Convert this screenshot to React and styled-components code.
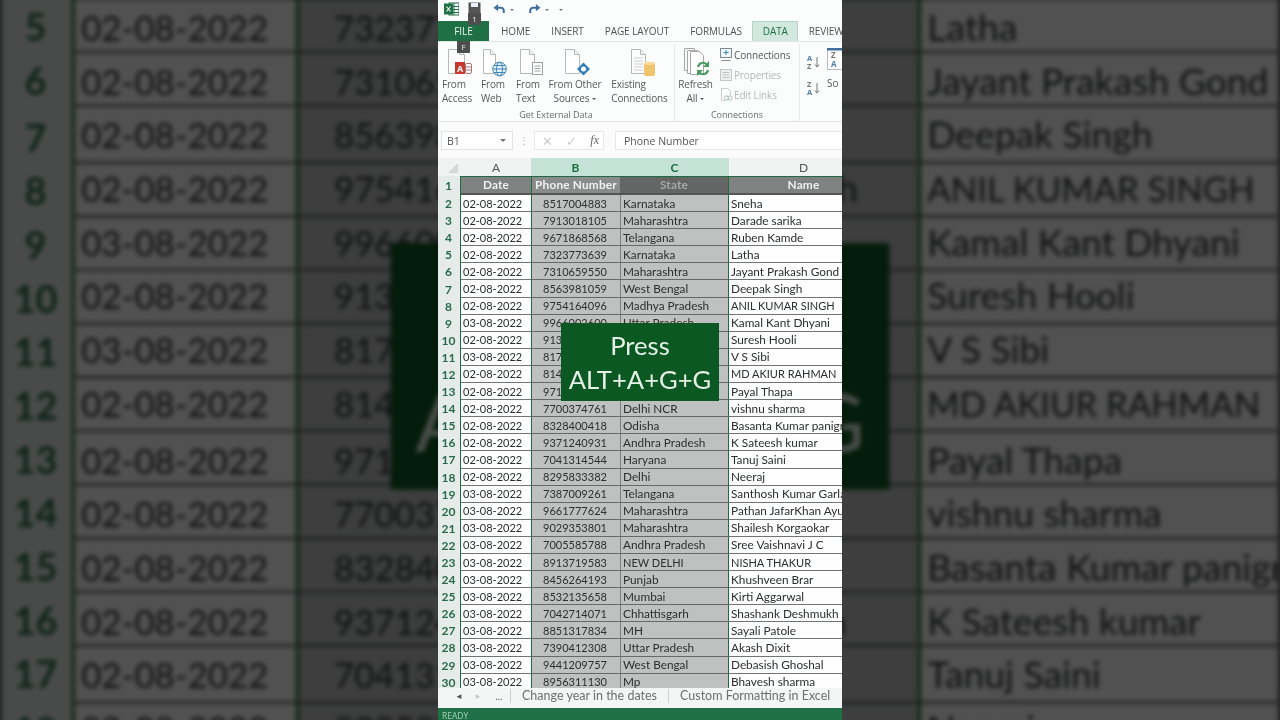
import React from 'react';
import styled, { createGlobalStyle } from 'styled-components';

const GlobalStyle = createGlobalStyle`
  html, body { margin: 0; padding: 0; background: #222; }
  * { box-sizing: border-box; }
`;

const rows = [
  ['02-08-2022', '8517004883', 'Karnataka', 'Sneha'],
  ['02-08-2022', '7913018105', 'Maharashtra', 'Darade sarika'],
  ['02-08-2022', '9671868568', 'Telangana', 'Ruben Kamde'],
  ['02-08-2022', '7323773639', 'Karnataka', 'Latha'],
  ['02-08-2022', '7310659550', 'Maharashtra', 'Jayant Prakash Gond'],
  ['02-08-2022', '8563981059', 'West Bengal', 'Deepak Singh'],
  ['02-08-2022', '9754164096', 'Madhya Pradesh', 'ANIL KUMAR SINGH'],
  ['03-08-2022', '9966002600', 'Uttar Pradesh', 'Kamal Kant Dhyani'],
  ['02-08-2022', '9130000000', '', 'Suresh Hooli'],
  ['03-08-2022', '8170000000', '', 'V S Sibi'],
  ['02-08-2022', '8140000000', '', 'MD AKIUR RAHMAN'],
  ['02-08-2022', '9710000000', '', 'Payal Thapa'],
  ['02-08-2022', '7700374761', 'Delhi NCR', 'vishnu sharma'],
  ['02-08-2022', '8328400418', 'Odisha', 'Basanta Kumar panigrahi'],
  ['02-08-2022', '9371240931', 'Andhra Pradesh', 'K Sateesh kumar'],
  ['02-08-2022', '7041314544', 'Haryana', 'Tanuj Saini'],
  ['02-08-2022', '8295833382', 'Delhi', 'Neeraj'],
  ['03-08-2022', '7387009261', 'Telangana', 'Santhosh Kumar Garla'],
  ['03-08-2022', '9661777624', 'Maharashtra', 'Pathan JafarKhan Ayub'],
  ['03-08-2022', '9029353801', 'Maharashtra', 'Shailesh Korgaokar'],
  ['03-08-2022', '7005585788', 'Andhra Pradesh', 'Sree Vaishnavi J C'],
  ['03-08-2022', '8913719583', 'NEW DELHI', 'NISHA THAKUR'],
  ['03-08-2022', '8456264193', 'Punjab', 'Khushveen Brar'],
  ['03-08-2022', '8532135658', 'Mumbai', 'Kirti Aggarwal'],
  ['03-08-2022', '7042714071', 'Chhattisgarh', 'Shashank Deshmukh'],
  ['03-08-2022', '8851317834', 'MH', 'Sayali Patole'],
  ['03-08-2022', '7390412308', 'Uttar Pradesh', 'Akash Dixit'],
  ['03-08-2022', '9441209757', 'West Bengal', 'Debasish Ghoshal'],
  ['03-08-2022', '8956311130', 'Mp', 'Bhavesh sharma'],
];

const tabs = ['HOME', 'INSERT', 'PAGE LAYOUT', 'FORMULAS', 'DATA', 'REVIEW'];

const isCaps = (s) => s.length > 2 && s === s.toUpperCase();

const Stage = styled.div`
  position: relative;
  width: 1280px;
  height: 720px;
  overflow: hidden;
  display: flex;
  justify-content: center;
  background: #222;
`;

const Backdrop = styled.div`
  position: absolute;
  inset: 0;
  display: flex;
  justify-content: center;
  transform: scale(3.157);
  transform-origin: 50% 50%;
  filter: blur(0.6px) brightness(0.32);
`;

const Frame = styled.div`
  position: relative;
  width: 404px;
  height: 720px;
  flex: none;
  overflow: hidden;
  display: flex;
  flex-direction: column;
  background: #fbfdfc;
  font-family: "Open Sans", "Liberation Sans", sans-serif;
  filter: blur(0.35px);
`;

const TitleBar = styled.div`
  height: 21px;
  flex: none;
  display: flex;
  align-items: flex-start;
  padding: 2px 0 0 6px;
`;

const QatSlot = styled.div`
  flex: none;
  display: flex;
  margin-left: ${(p) => p.$ml}px;
  margin-top: ${(p) => p.$mt || 0}px;
`;

const TinyCaret = styled.span`
  flex: none;
  margin-left: ${(p) => p.$ml}px;
  margin-top: 7px;
  width: 0;
  height: 0;
  border-left: 2px solid transparent;
  border-right: 2px solid transparent;
  border-top: 2px solid #777;
`;

const TabRow = styled.div`
  height: 21px;
  flex: none;
  display: flex;
  border-bottom: 1px solid #dfe6e2;
`;

const FileTab = styled.div`
  width: 51px;
  flex: none;
  margin-right: 1.5px;
  padding-bottom: 1px;
  display: flex;
  align-items: center;
  justify-content: center;
  background: #1f7145;
  color: #e8f3ec;
  font-size: 10px;
`;

const Tab = styled.div`
  flex: none;
  padding: 0 9.5px 2px;
  display: flex;
  align-items: center;
  white-space: nowrap;
  font-size: 10px;
  letter-spacing: -0.1px;
  color: ${(p) => (p.$active ? '#1f7145' : '#4d5350')};
  background: ${(p) => (p.$active ? '#d2e8de' : 'transparent')};
  border: 1px solid ${(p) => (p.$active ? '#b5d3c5' : 'transparent')};
  border-bottom: none;
`;

const Ribbon = styled.div`
  height: 80px;
  flex: none;
  display: flex;
  border-bottom: 1px solid #dfe3e1;
`;

const Group = styled.div`
  width: ${(p) => p.$w}px;
  flex: none;
  display: flex;
  flex-direction: column;
  border-right: 1px solid #e6e9e7;
  margin-top: 2px;
`;

const GroupBody = styled.div`
  flex: 1;
  display: flex;
  min-height: 0;
`;

const GroupLabel = styled.div`
  height: 14px;
  text-align: center;
  font-size: 9px;
  line-height: 16px;
  color: #6a6f6c;
`;

const BigButton = styled.div`
  width: ${(p) => p.$w}px;
  flex: none;
  display: flex;
  flex-direction: column;
  align-items: center;
  font-size: 10px;
  line-height: 14px;
  letter-spacing: -0.15px;
  color: #555a57;
  white-space: nowrap;
  padding-top: 3px;
`;

const IconBox = styled.div`
  height: 30px;
  display: flex;
  align-items: flex-start;
`;

const MiniCaret = styled.span`
  display: inline-block;
  margin-left: 3px;
  vertical-align: 2px;
  width: 0;
  height: 0;
  border-left: 2px solid transparent;
  border-right: 2px solid transparent;
  border-top: 2px solid #555;
`;

const SmallList = styled.div`
  display: flex;
  flex-direction: column;
  gap: 2px;
  padding: 2px 0 0 3px;
`;

const SmallItem = styled.div`
  height: 18px;
  display: flex;
  align-items: center;
  font-size: 10px;
  letter-spacing: -0.15px;
  white-space: nowrap;
  color: ${(p) => (p.$off ? '#b5bab7' : '#555a57')};
`;

const SortColumn = styled.div`
  flex: none;
  display: flex;
  flex-direction: column;
  gap: 10px;
  padding: 12px 0 0 7px;
`;

const SortWide = styled.div`
  flex: none;
  margin-left: 6px;
  padding-top: 6px;
  font-size: 10px;
  color: #555a57;
  display: flex;
  flex-direction: column;
  gap: 6px;
  line-height: 14px;
`;

const FormulaBar = styled.div`
  height: 36px;
  flex: none;
  display: flex;
  align-items: flex-start;
  padding: 9px 0 0 3px;
  background: #fafbfa;
`;

const NameBox = styled.div`
  width: 72px;
  height: 19px;
  display: flex;
  align-items: center;
  justify-content: space-between;
  padding: 0 6px 0 5px;
  border: 1px solid #e2e4e3;
  background: #fff;
  font-size: 10.5px;
  color: #555;
`;

const Caret = styled.span`
  width: 0;
  height: 0;
  border-left: 3px solid transparent;
  border-right: 3px solid transparent;
  border-top: 3px solid #777;
`;

const Dots = styled.div`
  width: 21px;
  text-align: center;
  font-size: 10px;
  line-height: 18px;
  color: #aaa;
`;

const FormulaButtons = styled.div`
  width: 70px;
  height: 19px;
  display: flex;
  align-items: center;
  justify-content: space-between;
  padding: 0 4px 0 7px;
  border: 1px solid #e6e8e7;
  background: #fff;
  color: #c9cccb;
  font-size: 13px;
`;

const FxLabel = styled.span`
  font-family: "Liberation Serif", serif;
  font-style: italic;
  font-size: 12px;
  color: #666;
`;

const FormulaInput = styled.div`
  flex: 1;
  height: 19px;
  margin-left: 11px;
  padding-left: 8px;
  display: flex;
  align-items: center;
  border: 1px solid #e6e8e7;
  border-right: none;
  background: #fff;
  font-size: 10.5px;
  color: #555;
`;

const sheetColumns = '23px 70px 89px 109px 149px';

const ColumnHeader = styled.div`
  height: 18px;
  flex: none;
  display: grid;
  grid-template-columns: ${sheetColumns};
  background: #f1f3f2;
  font-family: "Lato", "Liberation Sans", sans-serif;
`;

const ColumnCell = styled.div`
  display: flex;
  align-items: center;
  justify-content: center;
  font-size: 12px;
  font-weight: ${(p) => (p.$selected ? 700 : 400)};
  color: ${(p) => (p.$selected ? '#1f6b43' : '#555')};
  background: ${(p) => (p.$selected ? '#c4e2d5' : 'transparent')};
`;

const Corner = styled.div`
  width: 0;
  height: 0;
  margin: 5px 0 0 10px;
  border-left: 10px solid transparent;
  border-bottom: 10px solid #d5d8d6;
`;

const Grid = styled.div`
  flex: 1;
  min-height: 0;
  overflow: hidden;
  display: grid;
  grid-template-columns: ${sheetColumns};
  grid-template-rows: 19px;
  grid-auto-rows: 17.107px;
  align-content: start;
  font-family: "Lato", "Liberation Sans", sans-serif;
  font-size: 11.8px;
  color: #2b2f2d;
`;

const RowNumber = styled.div`
  display: flex;
  align-items: center;
  justify-content: center;
  padding-right: 1px;
  background: #e4ebe8;
  border-right: 1px solid #1f6b43;
  font-size: 12px;
  font-weight: 700;
  color: #2a6a4c;
`;

const Cell = styled.div`
  display: flex;
  align-items: center;
  overflow: hidden;
  white-space: nowrap;
  padding-left: ${(p) => (p.$center ? 0 : 2)}px;
  justify-content: ${(p) => (p.$center ? 'center' : 'flex-start')};
  font-size: ${(p) => (p.$caps ? '11px' : 'inherit')};
  background: ${(p) => (p.$selected ? '#bfc1c0' : '#fdfefd')};
  border-bottom: 1px solid ${(p) => (p.$selected ? '#666967' : '#727573')};
  border-left: ${(p) => (p.$edgeLeft ? '1.5px solid #1f6b43' : p.$selected ? '1px solid #7c7f7d' : 'none')};
  border-right: ${(p) => (p.$edgeRight ? '1.5px solid #1f6b43' : 'none')};
`;

// dates and phone numbers: Lato digits run wider than the sheet's font
const NumberCell = styled(Cell)`
  font-size: 11px;
  padding-right: ${(p) => (p.$center ? 2 : 0)}px;
`;

const HeaderCell = styled(Cell)`
  justify-content: center;
  padding-left: 0;
  padding-bottom: 1px;
  font-weight: 700;
  letter-spacing: 0.2px;
  background: ${(p) => p.$bg};
  color: ${(p) => p.$fg};
  border-top: 1px solid #1f6b43;
  border-bottom: 2px solid #555;
`;

const SheetTabs = styled.div`
  height: 20px;
  flex: none;
  display: flex;
  align-items: center;
  padding: 0 0 4px 6px;
  background: #f3f6f4;
  color: #6c716e;
  font-family: "Lato", "Liberation Sans", sans-serif;
  font-size: 12.5px;
`;

const TabNav = styled.span`
  flex: none;
  width: ${(p) => p.$w}px;
  padding-left: ${(p) => p.$pad || 0}px;
  text-align: center;
  font-size: ${(p) => (p.$pad ? 10 : 8)}px;
  color: ${(p) => (p.$dim ? '#c8cbc9' : '#555')};
`;

const SheetTab = styled.div`
  flex: none;
  padding: 0 11px;
  height: 14px;
  line-height: 13px;
  border-left: 1px solid #cfd3d1;
  white-space: nowrap;
`;

const StatusBar = styled.div`
  height: 12px;
  flex: none;
  padding-left: 4px;
  background: #1f7145;
  color: #a9d0ba;
  font-size: 8.5px;
  line-height: 16px;
`;

const Banner = styled.div`
  position: absolute;
  left: 123px;
  top: 323px;
  width: 158px;
  height: 78px;
  display: flex;
  flex-direction: column;
  align-items: center;
  justify-content: center;
  background: #0c5822;
  color: #e6f1e8;
  font-family: "Lato", "Open Sans", sans-serif;
  font-size: 25.6px;
  line-height: 34px;
`;

const KeyTip = styled.div`
  position: absolute;
  left: ${(p) => p.$x}px;
  top: ${(p) => p.$y}px;
  width: 13px;
  height: 12px;
  background: #4e4e4e;
  color: #eee;
  font-size: 8px;
  line-height: 12px;
  text-align: center;
`;

// blank sheet with a folded corner, the base of most ribbon icons
const Sheet = ({ x, w = 15 }) => (
  <g transform={`translate(${x} 0)`}>
    <path d={`M0.5 2.5h${w - 6}l5 5v19h-${w - 1}z`} fill="#fff" stroke="#b4b9b6" />
    <path d={`M${w - 5.5} 2.5v5h5`} fill="#f1f3f2" stroke="#b4b9b6" />
  </g>
);

const AccessIcon = () => (
  <svg width="30" height="29" viewBox="0 0 30 29">
    <Sheet x={6} w={17} />
    <rect x="13" y="15" width="10" height="12" fill="#c8382e" />
    <text x="18" y="25" textAnchor="middle" fontSize="9" fontWeight="700" fill="#fff" fontFamily="Open Sans">A</text>
    <rect x="23.5" y="16.5" width="6" height="10" rx="1.5" fill="#fff" stroke="#a77" />
    <path d="M24 20h5M24 23h5" stroke="#a77" />
  </svg>
);

const WebIcon = () => (
  <svg width="28" height="30" viewBox="0 0 28 30">
    <Sheet x={4} w={13} />
    <circle cx="20.5" cy="22" r="6.8" fill="#e2f0f8" stroke="#3f86b5" />
    <ellipse cx="20.5" cy="22" rx="3" ry="6.8" fill="none" stroke="#3f86b5" />
    <path d="M14 22h13M15 18.5h11M15 25.5h11" stroke="#3f86b5" />
  </svg>
);

const TextIcon = () => (
  <svg width="30" height="29" viewBox="0 0 30 29">
    <Sheet x={7} />
    <rect x="19.5" y="15.5" width="10" height="12" fill="#fff" stroke="#9da2a0" />
    <path d="M21.5 19h6M21.5 21.5h6M21.5 24h6" stroke="#9da2a0" />
  </svg>
);

const OtherIcon = () => (
  <svg width="30" height="29" viewBox="0 0 30 29">
    <Sheet x={5} />
    <path d="M23.5 15.5l6.5 6.5-6.5 6.5-6.5-6.5z" fill="#2f7fb6" />
    <circle cx="23.5" cy="22" r="2.5" fill="#fff" />
  </svg>
);

const ExistingIcon = () => (
  <svg width="30" height="30" viewBox="0 0 30 30">
    <Sheet x={6} />
    <path d="M9 11h9M9 14h9M9 17h9M9 20h9M9 23h9" stroke="#c9ccca" />
    <rect x="19" y="15" width="11" height="14" rx="2" fill="#f0c46c" />
    <ellipse cx="24.5" cy="16.2" rx="5.5" ry="1.8" fill="#f8dd9f" />
  </svg>
);

const RefreshIcon = () => (
  <svg width="30" height="30" viewBox="0 0 30 30">
    <path d="M3.5 1.5h10v22h-10z" fill="#f6f7f6" stroke="#a5aaa7" />
    <path d="M6.5 3.5h10v23h-10z" fill="#f9faf9" stroke="#a5aaa7" />
    <path d="M9.5 4.5h9l4 4v19h-13z" fill="#fff" stroke="#a5aaa7" />
    <path d="M17 20a5 5 0 0 1 8.6-2.6" fill="none" stroke="#4b9b63" strokeWidth="2.2" />
    <path d="M28 14v6h-6z" fill="#4b9b63" />
    <path d="M27 23a5 5 0 0 1-8.6 2.6" fill="none" stroke="#4b9b63" strokeWidth="2.2" />
    <path d="M16 29v-6h6z" fill="#4b9b63" />
  </svg>
);

const ConnectionsIcon = () => (
  <svg width="15" height="14" viewBox="0 0 15 14">
    <rect x="1.5" y="0.5" width="11" height="9" fill="#eef6fb" stroke="#7b8a94" />
    <path d="M7 2v5M4.5 4.5h5" stroke="#3f86b5" />
    <path d="M2.5 12.5h9" stroke="#8a8f8c" />
  </svg>
);

const PropertiesIcon = () => (
  <svg width="15" height="14" viewBox="0 0 15 14">
    <rect x="1.5" y="1.5" width="11" height="11" fill="#eef0ef" stroke="#c3c7c5" />
    <path d="M3.5 4.5h7M3.5 7h7M3.5 9.5h7" stroke="#c3c7c5" />
  </svg>
);

const LinksIcon = () => (
  <svg width="15" height="14" viewBox="0 0 15 14">
    <path d="M2.5 0.5h6l3 3v4M2.5 0.5v12h4" fill="#fff" stroke="#c8ccca" />
    <rect x="5.5" y="8" width="4" height="4" rx="1.5" fill="none" stroke="#aeb9c2" />
    <rect x="9" y="8" width="4" height="4" rx="1.5" fill="none" stroke="#aeb9c2" />
  </svg>
);

const SortIcon = ({ top, bottom }) => (
  <svg width="14" height="16" viewBox="0 0 14 16">
    <text x="0" y="7" fontSize="7.5" fontWeight="700" fill={top === 'A' ? '#4a7fa8' : '#777'} fontFamily="Open Sans">{top}</text>
    <text x="0" y="15" fontSize="7.5" fontWeight="700" fill={bottom === 'A' ? '#4a7fa8' : '#777'} fontFamily="Open Sans">{bottom}</text>
    <path d="M10 3v10M8 10.5l2 2.5 2-2.5" fill="none" stroke="#777" />
  </svg>
);

const SortBox = () => (
  <svg width="16" height="22" viewBox="0 0 16 22">
    <rect x="0.5" y="0.5" width="20" height="21" fill="#fff" stroke="#b7bbb9" />
    <rect x="0" y="0" width="16" height="2.5" fill="#3f6d9c" />
    <text x="4" y="10" fontSize="8" fontWeight="700" fill="#777" fontFamily="Open Sans">Z</text>
    <text x="4" y="19" fontSize="8" fontWeight="700" fill="#4a7fa8" fontFamily="Open Sans">A</text>
  </svg>
);

const ExcelLogo = () => (
  <svg width="15" height="14" viewBox="0 0 15 14">
    <rect x="5" y="1" width="10" height="12" fill="#fff" stroke="#1f7145" />
    <path d="M10 1v12M5 4.5h10M5 7.5h10M5 10.5h10" stroke="#1f7145" />
    <rect x="0" y="1.5" width="9" height="11" fill="#1f7145" />
    <path d="M2.5 4.5l4 5M6.5 4.5l-4 5" stroke="#fff" strokeWidth="1.1" />
  </svg>
);

const SaveIcon = () => (
  <svg width="13" height="13" viewBox="0 0 13 13">
    <path d="M0.5 0.5h12v12h-12z" fill="#555" />
    <rect x="3" y="1" width="7" height="4" fill="#eef" />
  </svg>
);

const UndoGlyph = styled.svg`
  transform: ${(p) => (p.$flip ? 'scaleX(-1)' : 'none')};
`;

const UndoIcon = ({ flip }) => (
  <UndoGlyph $flip={flip} width="13" height="10" viewBox="0 0 14 11">
    <path d="M3.5 4h5a3.2 3.2 0 0 1 3.2 3.2V10" fill="none" stroke="#3f6d9c" strokeWidth="2.2" />
    <path d="M5.5 0v8L0.5 4z" fill="#3f6d9c" />
  </UndoGlyph>
);

const Workbook = () => (
  <>
    <TitleBar>
      <ExcelLogo />
      <QatSlot $ml={9}><SaveIcon /></QatSlot>
      <QatSlot $ml={12} $mt={2}><UndoIcon /></QatSlot>
      <TinyCaret $ml={4} />
      <QatSlot $ml={14} $mt={2}><UndoIcon flip /></QatSlot>
      <TinyCaret $ml={4} />
      <TinyCaret $ml={10} />
    </TitleBar>
    <TabRow>
      <FileTab>FILE</FileTab>
      {tabs.map((t) => (
        <Tab key={t} $active={t === 'DATA'}>{t}</Tab>
      ))}
    </TabRow>
    <Ribbon>
      <Group $w={237}>
        <GroupBody>
          <BigButton $w={38}>
            <IconBox><AccessIcon /></IconBox>From<br />Access
          </BigButton>
          <BigButton $w={34}>
            <IconBox><WebIcon /></IconBox>From<br />Web
          </BigButton>
          <BigButton $w={36}>
            <IconBox><TextIcon /></IconBox>From<br />Text
          </BigButton>
          <BigButton $w={58}>
            <IconBox><OtherIcon /></IconBox>From Other<br /><span>Sources<MiniCaret /></span>
          </BigButton>
          <BigButton $w={71}>
            <IconBox><ExistingIcon /></IconBox>Existing<br />Connections
          </BigButton>
        </GroupBody>
        <GroupLabel>Get External Data</GroupLabel>
      </Group>
      <Group $w={125}>
        <GroupBody>
          <BigButton $w={41}>
            <IconBox><RefreshIcon /></IconBox>Refresh<br /><span>All<MiniCaret /></span>
          </BigButton>
          <SmallList>
            <SmallItem><ConnectionsIcon />Connections</SmallItem>
            <SmallItem $off><PropertiesIcon />Properties</SmallItem>
            <SmallItem $off><LinksIcon />Edit Links</SmallItem>
          </SmallList>
        </GroupBody>
        <GroupLabel>Connections</GroupLabel>
      </Group>
      <GroupBody>
        <SortColumn>
          <SortIcon top="A" bottom="Z" />
          <SortIcon top="Z" bottom="A" />
        </SortColumn>
        <SortWide>
          <SortBox />
          <span>So</span>
        </SortWide>
      </GroupBody>
    </Ribbon>
    <FormulaBar>
      <NameBox>B1<Caret /></NameBox>
      <Dots>⋮</Dots>
      <FormulaButtons>
        <span>✕</span>
        <span>✓</span>
        <FxLabel>fx</FxLabel>
      </FormulaButtons>
      <FormulaInput>Phone Number</FormulaInput>
    </FormulaBar>
    <ColumnHeader>
      <div><Corner /></div>
      <ColumnCell>A</ColumnCell>
      <ColumnCell $selected>B</ColumnCell>
      <ColumnCell $selected>C</ColumnCell>
      <ColumnCell>D</ColumnCell>
    </ColumnHeader>
    <Grid>
      <RowNumber>1</RowNumber>
      <HeaderCell $bg="#7f8280" $fg="#eef1ef">Date</HeaderCell>
      <HeaderCell $bg="#8a8c8b" $fg="#f0f2f1" $edgeLeft>Phone Number</HeaderCell>
      <HeaderCell $bg="#636665" $fg="#a4aca8" $edgeRight>State</HeaderCell>
      <HeaderCell $bg="#7f8280" $fg="#eef1ef">Name</HeaderCell>
      {rows.map((r, i) => (
        <React.Fragment key={i}>
          <RowNumber>{i + 2}</RowNumber>
          <NumberCell>{r[0]}</NumberCell>
          <NumberCell $selected $center $edgeLeft>{r[1]}</NumberCell>
          <Cell $selected $edgeRight $caps={isCaps(r[2])}>{r[2]}</Cell>
          <Cell $caps={isCaps(r[3])}>{r[3]}</Cell>
        </React.Fragment>
      ))}
    </Grid>
    <SheetTabs>
      <TabNav $w={30}>◄</TabNav>
      <TabNav $w={8} $dim>►</TabNav>
      <TabNav $w={28} $pad={6}>...</TabNav>
      <SheetTab>Change year in the dates</SheetTab>
      <SheetTab>Custom Formatting in Excel</SheetTab>
    </SheetTabs>
    <StatusBar>READY</StatusBar>
    <KeyTip $x={30} $y={13}>1</KeyTip>
    <KeyTip $x={19} $y={41}>F</KeyTip>
    <Banner>
      <span>Press</span>
      <span>ALT+A+G+G</span>
    </Banner>
  </>
);

export default function App() {
  return (
    <>
      <GlobalStyle />
      <Stage>
        <Backdrop aria-hidden="true">
          <Frame><Workbook /></Frame>
        </Backdrop>
        <Frame><Workbook /></Frame>
      </Stage>
    </>
  );
}
